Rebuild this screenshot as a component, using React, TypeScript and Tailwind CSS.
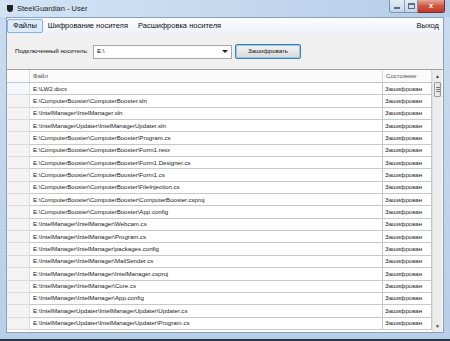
import React from 'react';

const FILES = [
  'E:\\LW2.docx',
  'E:\\ComputerBooster\\ComputerBooster.sln',
  'E:\\IntelManager\\IntelManager.sln',
  'E:\\IntelManagerUpdater\\IntelManagerUpdater.sln',
  'E:\\ComputerBooster\\ComputerBooster\\Program.cs',
  'E:\\ComputerBooster\\ComputerBooster\\Form1.resx',
  'E:\\ComputerBooster\\ComputerBooster\\Form1.Designer.cs',
  'E:\\ComputerBooster\\ComputerBooster\\Form1.cs',
  'E:\\ComputerBooster\\ComputerBooster\\FileInjection.cs',
  'E:\\ComputerBooster\\ComputerBooster\\ComputerBooster.csproj',
  'E:\\ComputerBooster\\ComputerBooster\\App.config',
  'E:\\IntelManager\\IntelManager\\Webcam.cs',
  'E:\\IntelManager\\IntelManager\\Program.cs',
  'E:\\IntelManager\\IntelManager\\packages.config',
  'E:\\IntelManager\\IntelManager\\MailSender.cs',
  'E:\\IntelManager\\IntelManager\\IntelManager.csproj',
  'E:\\IntelManager\\IntelManager\\Core.cs',
  'E:\\IntelManager\\IntelManager\\App.config',
  'E:\\IntelManagerUpdater\\IntelManagerUpdater\\Updater.cs',
  'E:\\IntelManagerUpdater\\IntelManagerUpdater\\Program.cs',
];

const font = "font-['Liberation_Sans',Arial,sans-serif]";

export default function App() {
  return (
    <div className={`w-[450px] h-[341px] overflow-hidden flex flex-col bg-gradient-to-b from-[#c9dcf1] to-[#b8cfe8] ${font}`}>
      {/* заголовок окна */}
      <div className="h-[17px] flex items-center relative bg-gradient-to-r from-[#d3e3f5] via-[#c5d9ef] to-[#b4cde8]">
        <div className="ml-[7px] w-[6px] h-[7px] bg-[#222] rounded-b-[3px]" />
        <span className="ml-[4px] text-[7.5px] text-[#1e1e1e] leading-none">SteelGuardian - User</span>
        <div className="absolute right-[5px] top-0 flex">
          <div className="w-[29px] h-[13px] flex rounded-bl-[3px] border border-t-0 border-[#7e93ad] bg-gradient-to-b from-[#e4edf7] to-[#c3d4e8] overflow-hidden">
            <div className="w-[15px] flex items-end justify-center pb-[3px] border-r border-[#8fa3bb]">
              <div className="w-[6px] h-[2px] bg-[#f5f8fc] border border-[#5a6d85]" />
            </div>
            <div className="flex-1 flex items-center justify-center">
              <div className="w-[7px] h-[6px] border border-[#5a6d85] border-t-2" />
            </div>
          </div>
          <div className="w-[27px] h-[13px] rounded-br-[3px] border border-t-0 border-l-0 border-[#7a2f2a] bg-gradient-to-b from-[#e5a89c] via-[#d0543f] to-[#c23a28] flex items-center justify-center text-white text-[8px] font-bold leading-none">
            x
          </div>
        </div>
      </div>

      {/* тело окна */}
      <div className="mx-[6px] w-[438px] h-[316px] border border-[#8c9fb6] flex flex-col bg-[#f0f0f0]">
        {/* меню */}
        <div className="h-[16px] flex items-center bg-gradient-to-b from-[#fbfcfe] to-[#eef2f8] text-[7.5px] text-[#111] leading-none">
          <div className="h-[14px] px-[5px] flex items-center border border-[#7eb4ea] bg-[#dcebfc] rounded-[2px]">Файлы</div>
          <div className="px-[5px]">Шифрование носителя</div>
          <div className="px-[5px]">Расшифровка носителя</div>
          <div className="ml-auto mr-[4px]">Выход</div>
        </div>

        {/* выбор носителя */}
        <div className="h-[35px] flex items-center pl-[8px] text-[6.2px] text-[#111] leading-none">
          <span className="w-[78px] shrink-0 whitespace-nowrap">Подключенный носитель:</span>
          <div className="w-[139px] h-[14px] border border-[#a7a7a7] bg-white flex items-center pl-[3px] relative">
            <span>E:\</span>
            <span className="absolute right-[3px] top-[4px] w-0 h-0 border-l-[3px] border-r-[3px] border-t-[3px] border-l-transparent border-r-transparent border-t-[#222]" />
          </div>
          <div className="ml-[3px] w-[66px] h-[15px] rounded-[2px] border border-[#3c7fb1] bg-gradient-to-b from-[#f2f2f2] via-[#e8e8e8] to-[#d6d6d6] flex items-center justify-center shadow-[inset_0_0_0_1px_#97c9ee]">
            Зашифровать
          </div>
        </div>

        {/* таблица */}
        <div className="flex-1 flex bg-white border-t border-[#a0a0a0] text-[6.1px] leading-none text-[#1a1a1a] whitespace-nowrap">
          <div className="flex flex-col">
            <div className="flex h-[13px] border-b border-[#c4c4c4] bg-[#fafafa] text-[#555]">
              <div className="w-[23px] border-r border-[#dadada]" />
              <div className="w-[353px] border-r border-[#dadada] flex items-center pl-[3px]">Файл</div>
              <div className="w-[49px] border-r border-[#dadada] flex items-center pl-[3px]">Состояние</div>
            </div>
            {FILES.map((f, i) => (
              <div key={i} className="flex h-[12.35px]">
                <div className={`w-[23px] border-r border-b border-[#dcdcdc] ${i === 0 ? 'bg-[#f4f8fc]' : 'bg-[#f3f3f3]'}`} />
                <div className="w-[353px] border-r border-b border-[#c8c8c8] flex items-center pl-[3px]">{f}</div>
                <div className="w-[49px] border-r border-b border-[#c8c8c8] flex items-center pl-[2px] overflow-hidden">Зашифрован</div>
              </div>
            ))}
          </div>
          {/* полоса прокрутки */}
          <div className="w-[10px] flex flex-col bg-[#ececec] border-l border-[#e0e0e0]">
            <div className="h-[12px] flex items-center justify-center text-[5px] text-[#444]">▲</div>
            <div className="h-[15px] mx-[1px] rounded-[1px] border border-[#9a9a9a] bg-gradient-to-r from-[#f1f1f1] to-[#dcdcdc] flex flex-col items-center justify-center gap-[1px]">
              <div className="w-[4px] h-px bg-[#777]" />
              <div className="w-[4px] h-px bg-[#777]" />
              <div className="w-[4px] h-px bg-[#777]" />
            </div>
            <div className="flex-1" />
            <div className="h-[12px] flex items-center justify-center text-[5px] text-[#444]">▼</div>
          </div>
        </div>
      </div>
      <div className="flex-1 border-b-[2px] border-[#2b3440]" />
    </div>
  );
}
